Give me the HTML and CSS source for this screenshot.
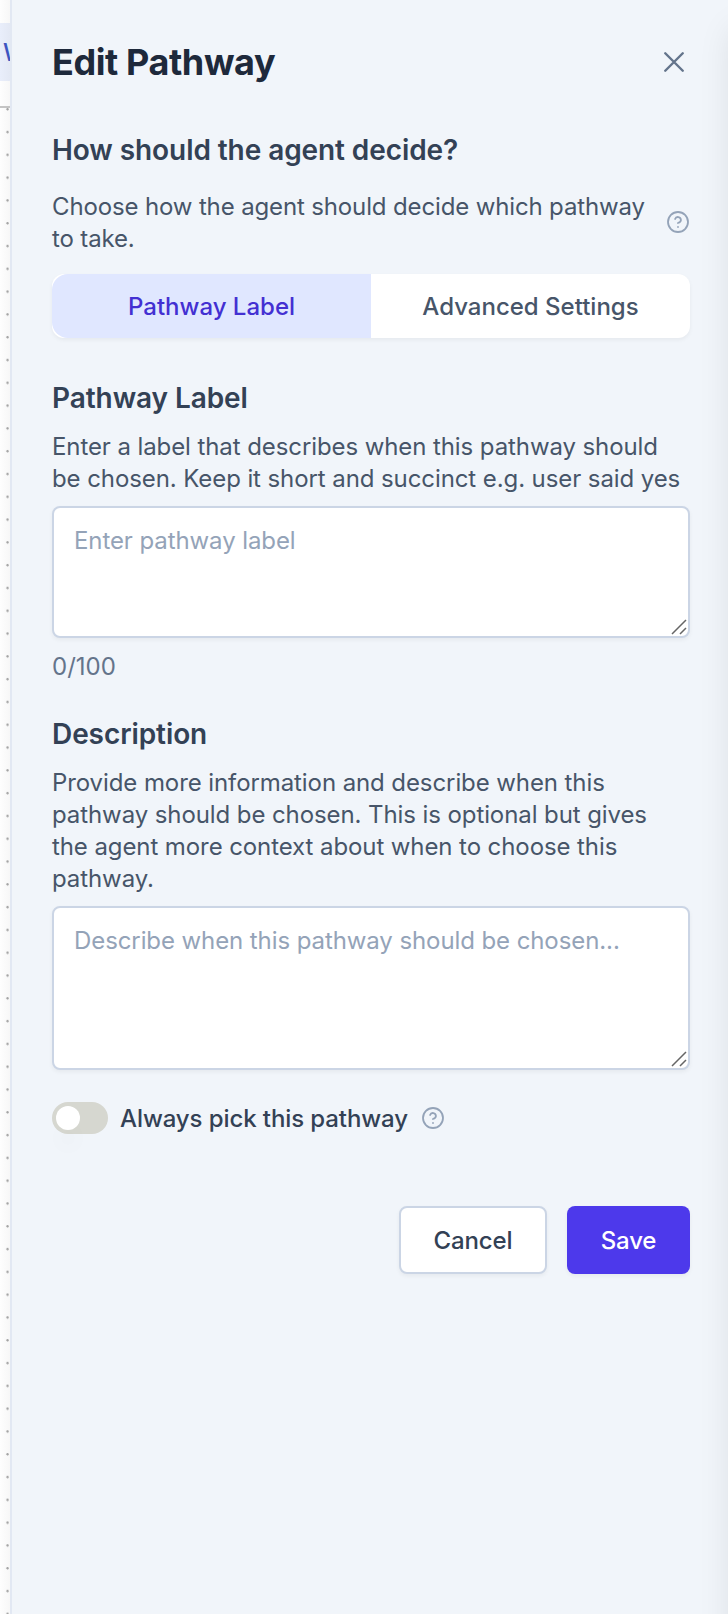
FILE: index.html
```html
<!DOCTYPE html>
<html lang="en">
<head>
<meta charset="utf-8">
<title>Edit Pathway</title>
<link rel="stylesheet" href="styles.css">
</head>
<body>
<div class="app">
  <div class="canvas">
    <div class="toolbar"><div class="tool">W</div></div>
    <div class="grid"></div>
  </div>
  <main class="panel">
    <header class="header">
      <h1 class="title">Edit Pathway</h1>
      <svg class="close" viewBox="0 0 24 24"><path d="M4.5 19.5 19.5 4.5M4.5 4.5l15 15"/></svg>
    </header>
    <section class="decide">
      <h2 class="heading">How should the agent decide?</h2>
      <div class="intro">
        <p class="text">Choose how the agent should decide which pathway<br>to take.</p>
        <svg class="help" viewBox="0 0 24 24"><circle cx="12" cy="12" r="10"/><path d="M9.09 9a3 3 0 0 1 5.83 1c0 2-3 3-3 3M12 17h.01"/></svg>
      </div>
      <div class="tabs">
        <div class="tab tab-active">Pathway Label</div>
        <div class="tab">Advanced Settings</div>
      </div>
    </section>
    <section class="field">
      <h2 class="heading">Pathway Label</h2>
      <p class="text">Enter a label that describes when this pathway should<br>be chosen. Keep it short and succinct e.g. user said yes</p>
      <div class="box">
        <textarea class="input input-label" placeholder="Enter pathway label"></textarea>
        <svg class="grip" viewBox="0 0 16 16"><path d="M1 15 15 1M9 15l6-6"/></svg>
      </div>
      <p class="text count">0/100</p>
    </section>
    <section class="field">
      <h2 class="heading">Description</h2>
      <p class="text">Provide more information and describe when this<br>pathway should be chosen. This is optional but gives<br>the agent more context about when to choose this<br>pathway.</p>
      <div class="box">
        <textarea class="input input-description" placeholder="Describe when this pathway should be chosen..."></textarea>
        <svg class="grip" viewBox="0 0 16 16"><path d="M1 15 15 1M9 15l6-6"/></svg>
      </div>
    </section>
    <div class="always">
      <div class="switch"><div class="knob"></div></div>
      <span class="always-label">Always pick this pathway</span>
      <svg class="help" viewBox="0 0 24 24"><circle cx="12" cy="12" r="10"/><path d="M9.09 9a3 3 0 0 1 5.83 1c0 2-3 3-3 3M12 17h.01"/></svg>
    </div>
    <footer class="actions">
      <button class="button cancel">Cancel</button>
      <button class="button save">Save</button>
    </footer>
    <div class="edge"></div>
  </main>
</div>
</body>
</html>
```
FILE: styles.css
```css
* { box-sizing: border-box; }
body { margin: 0; }
h1, h2, p { margin: 0; }

.app {
  display: flex;
  width: 728px;
  height: 1614px;
  overflow: hidden;
  font: 400 24px/32px Inter, sans-serif;
  letter-spacing: -0.09px;
  color: #475569;
}

.canvas {
  width: 10px;
  flex: none;
  overflow: hidden;
  background: linear-gradient(90deg, #fefefe, #f7f7f7);
}
.toolbar {
  height: 108px;
  padding-top: 23px;
  border-bottom: 2px solid #c4c4c4;
}
.tool {
  height: 58px;
  padding-left: 3px;
  line-height: 59px;
  font-weight: 500;
  color: #3d54c0;
  background: linear-gradient(90deg, #e9eefb, #e3e8f4);
}
.grid {
  height: 1506px;
  background: radial-gradient(circle at 7.5px 1.3px, #a3a3a3 0.8px, transparent 1.6px) 0 0 / 22.8px 22.8px;
}

.panel {
  position: relative;
  flex: 1;
  min-width: 0;
  padding: 42px 38px 0 40px;
  border-left: 2px solid #e2e8f3;
  background: #f1f5fa;
}
.edge {
  position: absolute;
  top: 0;
  left: 100%;
  width: 700px;
  height: 1700px;
  box-shadow: 0 25px 32px -4px rgba(0, 0, 0, 0.1);
}

.header {
  display: flex;
  justify-content: space-between;
  align-items: center;
  height: 40px;
}
.title {
  font-size: 36px;
  line-height: 40px;
  font-weight: 700;
  letter-spacing: -0.4px;
  color: #1e293b;
}
.close {
  width: 28px;
  height: 28px;
  margin-right: 2px;
  fill: none;
  stroke: #64748b;
  stroke-width: 2.1;
  stroke-linecap: round;
}

.decide { margin-top: 50px; }
.heading {
  font-size: 28px;
  line-height: 36px;
  font-weight: 600;
  letter-spacing: -0.08px;
  color: #334155;
}
.intro {
  display: flex;
  justify-content: space-between;
  align-items: center;
  margin-top: 22px;
}
.text {
  padding-top: 1px;
  margin-bottom: -1px;
  white-space: nowrap;
}
.intro .text { letter-spacing: -0.14px; }
.help {
  width: 24px;
  height: 24px;
  flex: none;
  fill: none;
  stroke: #94a3b8;
  stroke-width: 1.8;
  stroke-linecap: round;
  stroke-linejoin: round;
}

.tabs {
  display: flex;
  height: 64px;
  margin-top: 20px;
  overflow: hidden;
  border-radius: 12px;
  background: #fff;
  box-shadow: 0 2px 4px rgba(0, 0, 0, 0.05);
}
.tab {
  flex: 1;
  text-align: center;
  line-height: 65px;
  font-weight: 500;
  letter-spacing: 0;
}
.tab-active {
  border-radius: 16px 0 0 16px;
  color: #4330d2;
  background: #e0e7ff;
}

.field { margin-top: 42px; }
.field + .field { margin-top: 34px; }
.field .heading { margin-bottom: 14px; }
.box {
  position: relative;
  margin-top: 12px;
}
.input {
  display: block;
  width: 100%;
  padding: 17px 20px 15px;
  border: 2px solid #cbd5e5;
  border-radius: 8px;
  outline: none;
  resize: none;
  font: inherit;
  letter-spacing: inherit;
  background: #fff;
  box-shadow: 0 2px 4px rgba(0, 0, 0, 0.05);
}
.input::placeholder { color: #94a3b8; }
.input-label { height: 132px; }
.input-description { height: 164px; }
.grip {
  position: absolute;
  right: 3px;
  bottom: 3px;
  width: 16px;
  height: 16px;
  fill: none;
  stroke: #666;
  stroke-width: 1.5;
}
.count {
  margin-top: 12px;
  letter-spacing: 0;
  color: #64748b;
}

.always {
  display: flex;
  align-items: center;
  margin-top: 32px;
}
.switch {
  width: 56px;
  height: 32px;
  padding: 4px;
  border-radius: 16px;
  background: #d6d7d0;
}
.knob {
  width: 24px;
  height: 24px;
  border-radius: 50%;
  background: #fff;
  box-shadow: 0 20px 20px -2px rgba(0, 0, 0, 0.025);
}
.always-label {
  margin: 0 13px 0 12px;
  padding-top: 2px;
  line-height: 30px;
  font-weight: 500;
  color: #334155;
}

.actions {
  display: flex;
  justify-content: flex-end;
  gap: 20px;
  margin-top: 72px;
}
.button {
  height: 68px;
  padding: 2px 0 0;
  border: 0;
  border-radius: 8px;
  font: inherit;
  font-weight: 500;
  letter-spacing: -0.15px;
  box-shadow: 0 2px 4px rgba(0, 0, 0, 0.05);
}
.cancel {
  width: 148px;
  border: 2px solid #cbd5e5;
  color: #334155;
  background: #fff;
}
.save {
  width: 123px;
  color: #fff;
  background: #4d39eb;
}
```
